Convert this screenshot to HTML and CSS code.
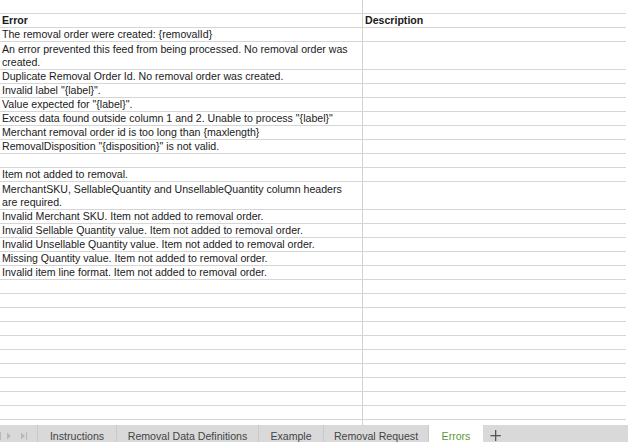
FILE: index.html
```html
<!DOCTYPE html>
<html>
<head>
<meta charset="utf-8">
<link rel="stylesheet" href="styles.css">
</head>
<body>
<div class="sheet">
  <div class="row"><div class="c1"></div><div class="c2"></div></div>
  <div class="row head"><div class="c1">Error</div><div class="c2">Description</div></div>
  <div class="row"><div class="c1">The removal order were created: {removalId}</div><div class="c2"></div></div>
  <div class="row tall"><div class="c1">An error prevented this feed from being processed. No removal order was created.</div><div class="c2"></div></div>
  <div class="row"><div class="c1">Duplicate Removal Order Id. No removal order was created.</div><div class="c2"></div></div>
  <div class="row"><div class="c1">Invalid label "{label}".</div><div class="c2"></div></div>
  <div class="row"><div class="c1">Value expected for "{label}".</div><div class="c2"></div></div>
  <div class="row"><div class="c1">Excess data found outside column 1 and 2. Unable to process "{label}"</div><div class="c2"></div></div>
  <div class="row"><div class="c1">Merchant removal order id is too long than {maxlength}</div><div class="c2"></div></div>
  <div class="row"><div class="c1">RemovalDisposition "{disposition}" is not valid.</div><div class="c2"></div></div>
  <div class="row"><div class="c1"></div><div class="c2"></div></div>
  <div class="row"><div class="c1">Item not added to removal.</div><div class="c2"></div></div>
  <div class="row tall"><div class="c1">MerchantSKU, SellableQuantity and UnsellableQuantity column headers are required.</div><div class="c2"></div></div>
  <div class="row"><div class="c1">Invalid Merchant SKU. Item not added to removal order.</div><div class="c2"></div></div>
  <div class="row"><div class="c1">Invalid Sellable Quantity value. Item not added to removal order.</div><div class="c2"></div></div>
  <div class="row"><div class="c1">Invalid Unsellable Quantity value. Item not added to removal order.</div><div class="c2"></div></div>
  <div class="row"><div class="c1">Missing Quantity value. Item not added to removal order.</div><div class="c2"></div></div>
  <div class="row"><div class="c1">Invalid item line format. Item not added to removal order.</div><div class="c2"></div></div>
  <div class="row"><div class="c1"></div><div class="c2"></div></div>
  <div class="row"><div class="c1"></div><div class="c2"></div></div>
  <div class="row"><div class="c1"></div><div class="c2"></div></div>
  <div class="row"><div class="c1"></div><div class="c2"></div></div>
  <div class="row"><div class="c1"></div><div class="c2"></div></div>
  <div class="row"><div class="c1"></div><div class="c2"></div></div>
  <div class="row"><div class="c1"></div><div class="c2"></div></div>
  <div class="row"><div class="c1"></div><div class="c2"></div></div>
  <div class="row"><div class="c1"></div><div class="c2"></div></div>
  <div class="row"><div class="c1"></div><div class="c2"></div></div>
  <div class="row"><div class="c1"></div><div class="c2"></div></div>
</div>
<div class="tabs">
  <div class="nav">
    <svg width="37" height="17" viewBox="0 0 37 17">
      <rect x="0" y="7" width="1" height="8" fill="#b8b8b8"/>
      <path d="M7 7.5 L11 11 L7 14.5 Z" fill="#b8b8b8"/>
      <path d="M21 7.5 L25 11 L21 14.5 Z" fill="#b8b8b8"/>
      <rect x="26" y="7" width="1" height="8" fill="#b8b8b8"/>
    </svg>
  </div>
  <div class="tab w1">Instructions</div>
  <div class="tab w2">Removal Data Definitions</div>
  <div class="tab w3">Example</div>
  <div class="tab w4">Removal Request</div>
  <div class="tab active">Errors</div>
  <div class="add">
    <svg width="14" height="17" viewBox="0 0 14 17">
      <rect x="6" y="5" width="1.3" height="11" fill="#555"/>
      <rect x="1.5" y="10" width="10.3" height="1.3" fill="#555"/>
    </svg>
  </div>
</div>
</body>
</html>
```

FILE: styles.css
```css
html, body {
  margin: 0;
  padding: 0;
  background: #fff;
  overflow: hidden;
}
body {
  width: 628px;
  height: 442px;
  font-family: "Liberation Sans", Arial, sans-serif;
  font-size: 10.6px;
  color: #1a1a1a;
}
.sheet {
  height: 425px;
  overflow: hidden;
}
.row {
  display: grid;
  grid-template-columns: 363px 263px;
  width: 626px;
  height: 14px;
  box-sizing: border-box;
  border-bottom: 1px solid #d6d6d6;
}
.row.tall {
  height: 28px;
}
.c1, .c2 {
  line-height: 13px;
  padding: 0 2px;
  white-space: nowrap;
  overflow: hidden;
}
.c1 {
  border-right: 1px solid #d0d0d0;
}
.tall .c1 {
  white-space: normal;
  padding-top: 1px;
}
.head .c1, .head .c2 {
  font-weight: bold;
}
.tabs {
  display: flex;
  height: 17px;
  background: #d9d9d9;
  color: #444;
  font-size: 10.6px;
}
.nav {
  width: 37px;
  border-right: 1px solid #c9c9c9;
}
.nav svg, .add svg {
  display: block;
}
.tab {
  box-sizing: border-box;
  text-align: center;
  line-height: 17px;
  padding-top: 3px;
  border-right: 1px solid #c9c9c9;
  white-space: nowrap;
}
.w1 { width: 79px; }
.w2 { width: 142px; }
.w3 { width: 65px; }
.w4 { width: 105px; }
.tab.active {
  width: 54px;
  background: #fff;
  color: #5a9a3a;
  border-right: none;
}
.add {
  width: 26px;
  display: flex;
  justify-content: center;
}
```
